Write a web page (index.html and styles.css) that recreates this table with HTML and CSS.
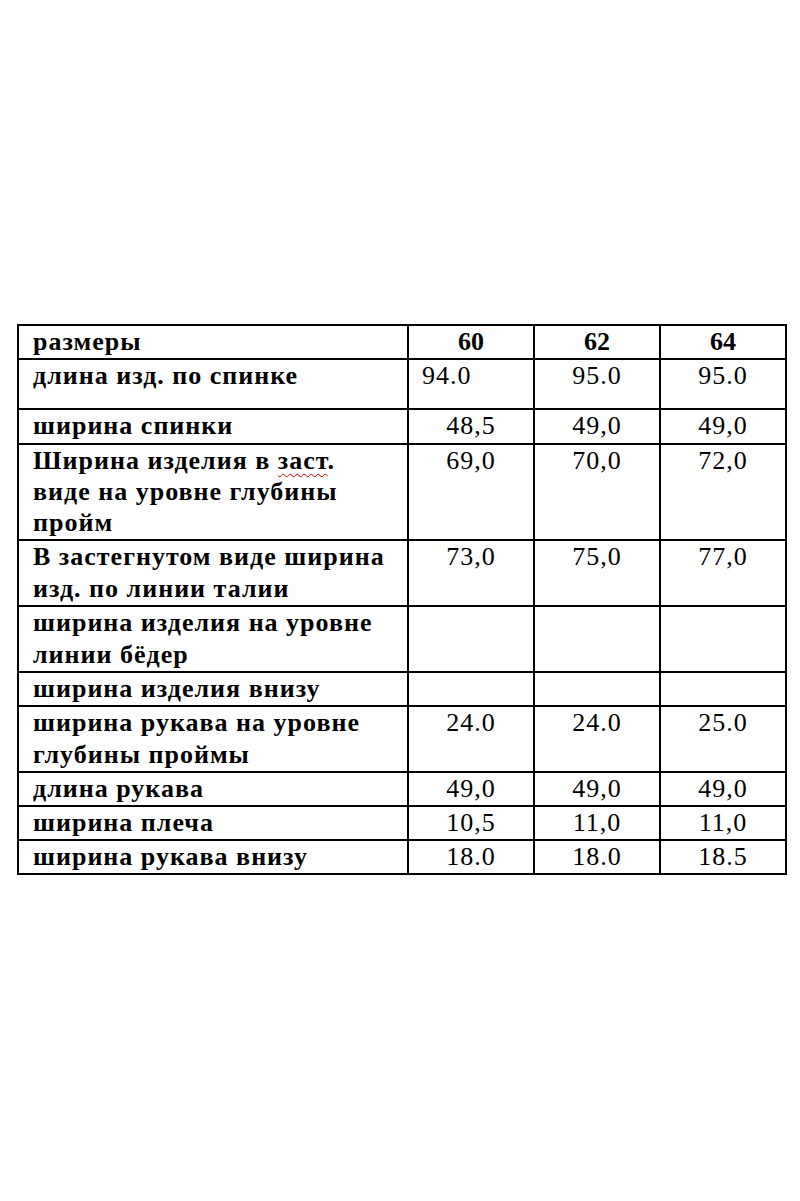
FILE: index.html
```html
<!DOCTYPE html>
<html lang="ru">
<head>
<meta charset="utf-8">
<title>Таблица размеров</title>
<link rel="stylesheet" href="styles.css">
</head>
<body>
<table class="sizes">
  <colgroup>
    <col class="c-label">
    <col class="c-val">
    <col class="c-val">
    <col class="c-val">
  </colgroup>
  <tr class="r1">
    <td class="label">размеры</td>
    <td class="head">60</td>
    <td class="head">62</td>
    <td class="head">64</td>
  </tr>
  <tr class="r2">
    <td class="label">длина изд. по спинке</td>
    <td class="val left">94.0</td>
    <td class="val">95.0</td>
    <td class="val">95.0</td>
  </tr>
  <tr class="r3">
    <td class="label">ширина спинки</td>
    <td class="val">48,5</td>
    <td class="val">49,0</td>
    <td class="val">49,0</td>
  </tr>
  <tr class="r4">
    <td class="label">Ширина изделия в <span class="spell">заст</span>. виде на уровне глубины пройм</td>
    <td class="val">69,0</td>
    <td class="val">70,0</td>
    <td class="val">72,0</td>
  </tr>
  <tr class="r5">
    <td class="label">В застегнутом виде ширина изд. по линии талии</td>
    <td class="val">73,0</td>
    <td class="val">75,0</td>
    <td class="val">77,0</td>
  </tr>
  <tr class="r6">
    <td class="label">ширина изделия на уровне линии бёдер</td>
    <td class="val"></td>
    <td class="val"></td>
    <td class="val"></td>
  </tr>
  <tr class="r7">
    <td class="label">ширина изделия внизу</td>
    <td class="val"></td>
    <td class="val"></td>
    <td class="val"></td>
  </tr>
  <tr class="r8">
    <td class="label">ширина рукава на уровне глубины проймы</td>
    <td class="val">24.0</td>
    <td class="val">24.0</td>
    <td class="val">25.0</td>
  </tr>
  <tr class="r9">
    <td class="label">длина рукава</td>
    <td class="val">49,0</td>
    <td class="val">49,0</td>
    <td class="val">49,0</td>
  </tr>
  <tr class="r10">
    <td class="label">ширина плеча</td>
    <td class="val">10,5</td>
    <td class="val">11,0</td>
    <td class="val">11,0</td>
  </tr>
  <tr class="r11">
    <td class="label">ширина рукава внизу</td>
    <td class="val">18.0</td>
    <td class="val">18.0</td>
    <td class="val">18.5</td>
  </tr>
</table>
</body>
</html>
```

FILE: styles.css
```css
html, body {
  margin: 0;
  padding: 0;
  background: #fff;
}

body {
  font-family: "Liberation Serif", "Times New Roman", serif;
  color: #000;
}

.sizes {
  margin: 324px 0 0 17px;
  width: 770px;
  border-collapse: collapse;
  table-layout: fixed;
}

.c-label { width: 390px; }
.c-val { width: 126px; }

.sizes td {
  border: 2px solid #000;
  padding: 0;
  vertical-align: top;
  font-size: 26px;
  line-height: 32px;
}

.label {
  font-weight: bold;
  letter-spacing: 1px;
  padding-left: 14px !important;
  padding-right: 14px !important;
}

.head {
  font-weight: bold;
  text-align: center;
}

.val {
  text-align: center;
  letter-spacing: 1px;
}

.val.left {
  text-align: left;
  padding-left: 13px !important;
}

.spell {
  text-decoration: underline wavy #d00000;
  text-decoration-thickness: 1px;
  text-underline-offset: 4px;
}

.r1 td { height: 31px; }
.r2 td { height: 48px; }
.r3 td { height: 33px; }
.r4 td { height: 94px; line-height: 31px; }
.r5 td { height: 64px; }
.r6 td { height: 63px; }
.r7 td { height: 31px; }
.r8 td { height: 64px; }
.r9 td { height: 31px; }
.r10 td { height: 31px; }
.r11 td { height: 31px; }
```
